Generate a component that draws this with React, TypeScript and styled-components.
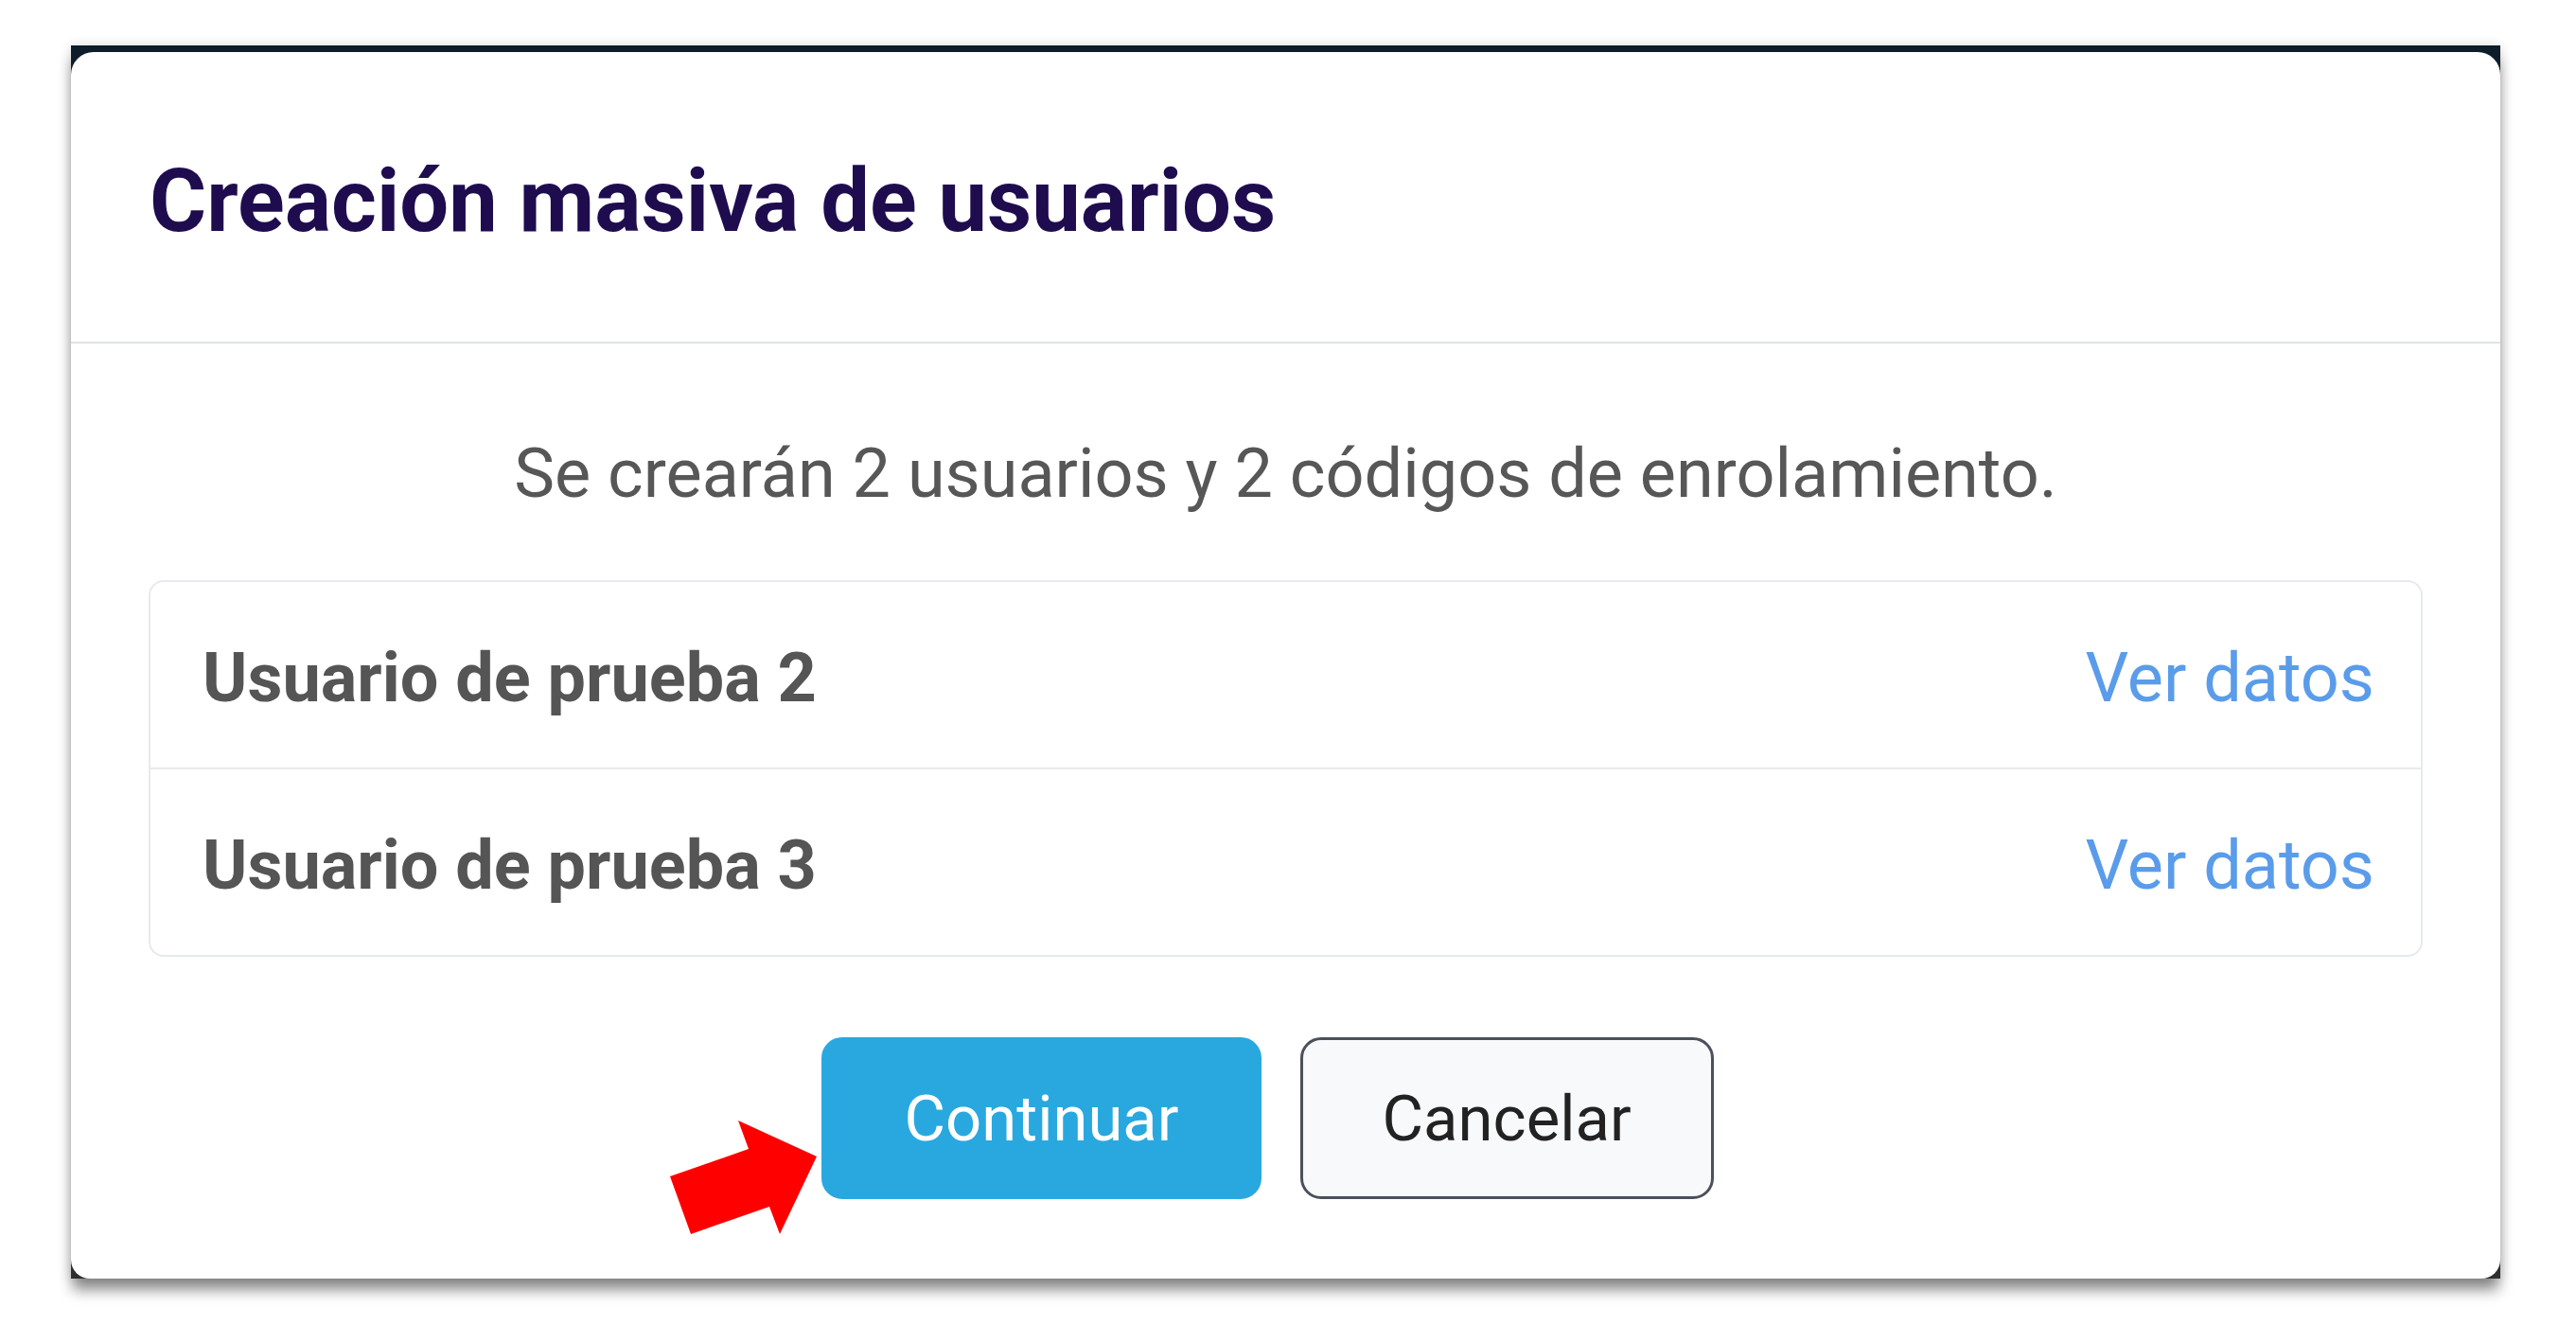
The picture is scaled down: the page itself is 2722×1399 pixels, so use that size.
import React from "react";
import styled, { createGlobalStyle, css } from "styled-components";

const users = [
  { id: 2, name: "Usuario de prueba 2" },
  { id: 3, name: "Usuario de prueba 3" },
];

function App() {
  return (
    <>
      <GlobalStyle />
      <StyledPage>
        <StyledFrame>
          <StyledDialog>
            <StyledHeader>
              <StyledTitle>Creación masiva de usuarios</StyledTitle>
            </StyledHeader>
            <StyledBody>
              <StyledLead>
                Se crearán 2 usuarios y 2 códigos de enrolamiento.
              </StyledLead>
              <StyledList>
                {users.map((user) => (
                  <StyledRow key={user.id}>
                    <StyledName>{user.name}</StyledName>
                    <StyledLink href="#">Ver datos</StyledLink>
                  </StyledRow>
                ))}
              </StyledList>
              <StyledActions>
                <StyledButton $variant="primary">Continuar</StyledButton>
                <StyledButton $variant="secondary">Cancelar</StyledButton>
              </StyledActions>
            </StyledBody>
          </StyledDialog>
          {/* annotation arrow pointing at the button */}
          <StyledArrow viewBox="625 1130 170 132">
            <polygon
              points="788,1174 705,1136 716,1166 633,1195 655,1256 738,1227 749,1256"
              fill="#ff0000"
            />
          </StyledArrow>
        </StyledFrame>
      </StyledPage>
    </>
  );
}

const GlobalStyle = createGlobalStyle`
  body {
    margin: 0;
    background: #ffffff;
    font-family: Roboto, "Liberation Sans", Arial, sans-serif;
  }
`;

const StyledPage = styled.div`
  padding: 48px 0 0 75px;
  min-height: 1399px;
  box-sizing: border-box;
`;

const StyledFrame = styled.div`
  position: relative;
  width: 2567px;
  height: 1303px;
  padding-top: 7px;
  box-sizing: border-box;
  background: linear-gradient(#0d1d29, #2e2e2e);
  box-shadow: 0 14px 14px -2px rgba(0, 0, 0, 0.45),
    0 0 12px rgba(0, 0, 0, 0.14);
`;

const StyledDialog = styled.div`
  height: 100%;
  background: #ffffff;
  border-radius: 24px 24px 20px 20px;
  display: flex;
  flex-direction: column;
`;

const StyledHeader = styled.header`
  padding: 112px 83px 102px;
  border-bottom: 2px solid #dfe3e6;
`;

const StyledTitle = styled.h1`
  margin: 0;
  font-size: 92px;
  line-height: 1;
  font-weight: 700;
  color: #1f0c4f;
`;

const StyledBody = styled.div`
  padding: 102px 82px 0;
`;

const StyledLead = styled.p`
  margin: 0;
  text-align: center;
  font-size: 72px;
  line-height: 1;
  color: #575757;
`;

const StyledList = styled.div`
  margin-top: 76px;
  border: 2px solid #e6eaee;
  border-radius: 16px;
`;

const StyledRow = styled.div`
  display: flex;
  justify-content: space-between;
  align-items: center;
  padding: 66px 49px 58px 55px;
  & + & {
    border-top: 2px solid #e6eaee;
  }
`;

const StyledName = styled.span`
  font-size: 72px;
  line-height: 1;
  font-weight: 700;
  color: #555555;
`;

const StyledLink = styled.a`
  font-size: 72px;
  line-height: 1;
  color: #5a9cea;
  text-decoration: none;
`;

const StyledActions = styled.div`
  display: flex;
  justify-content: center;
  gap: 41px;
  margin-top: 85px;
  padding-right: 38px;
`;

const StyledButton = styled.button<{ $variant: "primary" | "secondary" }>`
  height: 171px;
  padding: 0 84px;
  border-radius: 22px;
  font-family: inherit;
  font-size: 67px;
  font-weight: 400;
  cursor: pointer;
  ${({ $variant }) =>
    $variant === "primary"
      ? css`
          background: #29a8e0;
          border: 3px solid #29a8e0;
          color: #ffffff;
        `
      : css`
          background: #f8f9fa;
          border: 3px solid #4b505c;
          color: #222222;
        `}
`;

const StyledArrow = styled.svg`
  position: absolute;
  left: 625px;
  top: 1130px;
  width: 170px;
  height: 132px;
  pointer-events: none;
`;

export default App;
